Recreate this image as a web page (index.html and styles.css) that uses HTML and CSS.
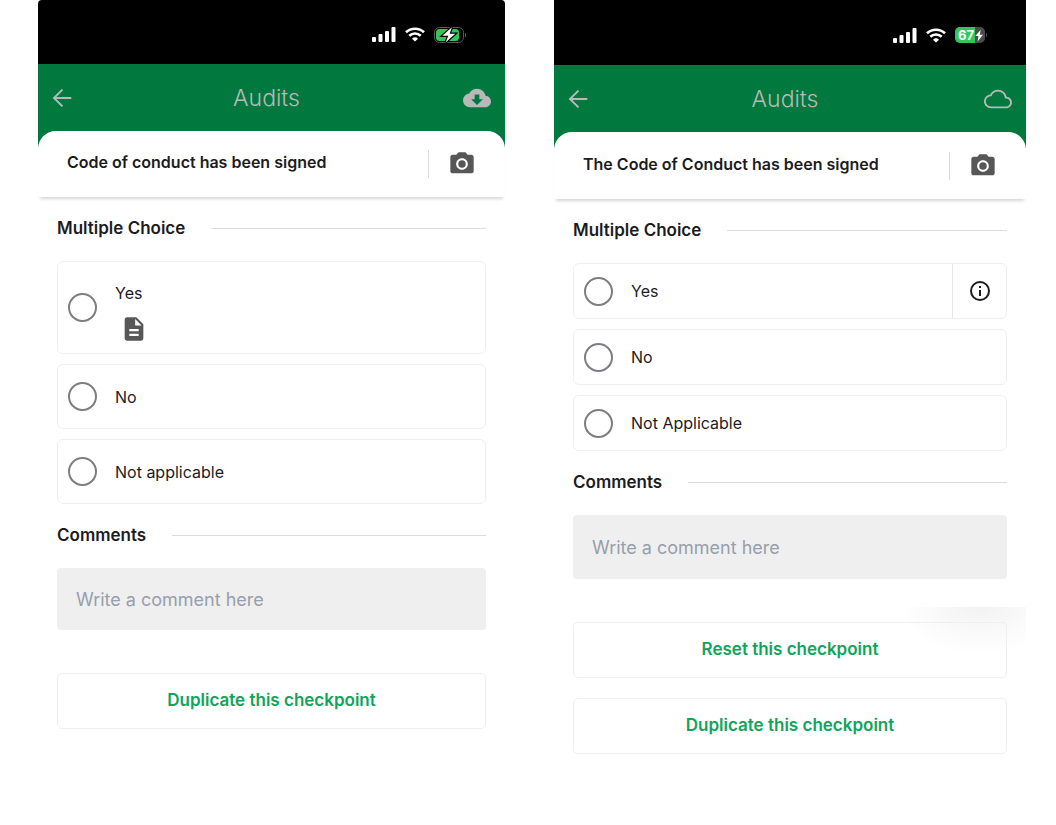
FILE: index.html
```
<!DOCTYPE html>
<html lang="en">
<head>
    <meta charset="UTF-8">
    <meta name="viewport" content="width=device-width, initial-scale=1.0">
    <title>Audits</title>
    <link rel="stylesheet" href="styles.css">
</head>
<body>
    <main class="screens">
        <section class="phone phone-rounded">
            <div class="status-bar">
                <svg class="signal" viewBox="0 0 24 15" fill="#fff">
                    <rect x="0" y="10" width="4" height="5" rx="1"/>
                    <rect x="6.500" y="7" width="4" height="8" rx="1"/>
                    <rect x="13" y="4" width="4" height="11" rx="1"/>
                    <rect x="19.500" y="0" width="4" height="15" rx="1"/>
                </svg>
                <svg class="wifi" viewBox="0 0 20 15" fill="none" stroke="#fff" stroke-width="2.600">
                    <path d="M1 5.300a13 13 0 0 1 18 0"/>
                    <path d="M4.300 8.800a8.200 8.200 0 0 1 11.400 0"/>
                    <path d="M10 14.600L7 11.700a4.400 4.400 0 0 1 6 0z" fill="#fff" stroke="none"/>
                </svg>
                <svg class="battery" viewBox="0 0 32 16">
                    <rect x="0.500" y="0.500" width="29" height="15" rx="5" fill="none" stroke="#5a5a5c"/>
                    <path d="M31 5.500a3 3 0 0 1 0 5z" fill="#5a5a5c"/>
                    <rect x="2" y="2" width="23" height="12" rx="3.500" fill="#31c759"/>
                    <path d="M18 0.300L8.300 8.700h6L11.600 15.500 21.300 6.700h-5.700z" fill="#fff" stroke="#000" stroke-width="2.400" paint-order="stroke"/>
                </svg>
            </div>
            <header class="app-bar">
                <button class="icon-btn" aria-label="Back">
                    <svg class="icon" viewBox="0 0 24 24" fill="currentColor"><path d="M20 11.200H7.200l5.800-5.800L11.800 4.200 4 12l7.800 7.800 1.200-1.200-5.800-5.800H20z"/></svg>
                </button>
                <h1>Audits</h1>
                <button class="icon-btn cloud-btn" aria-label="Download">
                    <svg class="icon" viewBox="0 0 24 24" fill="currentColor"><path d="M19.350 10.040C18.670 6.590 15.640 4 12 4 9.110 4 6.600 5.640 5.350 8.040 2.340 8.360 0 10.910 0 14c0 3.310 2.690 6 6 6h13c2.760 0 5-2.240 5-5 0-2.640-2.050-4.780-4.650-4.960zM17 13l-5 5-5-5h3V9h4v4h3z"/></svg>
                </button>
            </header>
            <div class="question-wrap">
                <div class="question">
                    <h2>Code of conduct has been signed</h2>
                    <button class="icon-btn camera-btn" aria-label="Take photo">
                        <svg class="icon" viewBox="0 0 24 24" fill="currentColor"><circle cx="12" cy="12" r="3.200"/><path d="M9 2L7.170 4H4c-1.100 0-2 .9-2 2v12c0 1.100.9 2 2 2h16c1.100 0 2-.9 2-2V6c0-1.100-.9-2-2-2h-3.170L15 2H9zm3 15c-2.760 0-5-2.240-5-5s2.240-5 5-5 5 2.240 5 5-2.240 5-5 5z"/></svg>
                    </button>
                </div>
            </div>
            <div class="content">
                <h3>Multiple Choice</h3>
                <div class="options">
                    <div class="option option-tall">
                        <input type="radio" name="signed-a" id="a-yes">
                        <div class="option-body">
                            <label for="a-yes">Yes</label>
                            <svg class="icon doc" viewBox="0 0 24 24" fill="currentColor"><path d="M14 2H6c-1.100 0-2 .9-2 2v16c0 1.100.9 2 2 2h12c1.100 0 2-.9 2-2V8l-6-6zm2 16H8v-2h8v2zm0-4H8v-2h8v2zm-3-5V3.500L18.500 9H13z"/></svg>
                        </div>
                    </div>
                    <div class="option">
                        <input type="radio" name="signed-a" id="a-no">
                        <label for="a-no">No</label>
                    </div>
                    <div class="option">
                        <input type="radio" name="signed-a" id="a-na">
                        <label for="a-na">Not applicable</label>
                    </div>
                </div>
                <h3><label for="a-comment">Comments</label></h3>
                <input type="text" class="comment" id="a-comment" placeholder="Write a comment here">
            </div>
            <div class="actions">
                <button class="btn">Duplicate this checkpoint</button>
            </div>
        </section>

        <section class="phone phone-compact">
            <div class="status-bar">
                <svg class="signal" viewBox="0 0 24 15" fill="#fff">
                    <rect x="0" y="10" width="4" height="5" rx="1"/>
                    <rect x="6.500" y="7" width="4" height="8" rx="1"/>
                    <rect x="13" y="4" width="4" height="11" rx="1"/>
                    <rect x="19.500" y="0" width="4" height="15" rx="1"/>
                </svg>
                <svg class="wifi" viewBox="0 0 20 15" fill="none" stroke="#fff" stroke-width="2.600">
                    <path d="M1 5.300a13 13 0 0 1 18 0"/>
                    <path d="M4.300 8.800a8.200 8.200 0 0 1 11.400 0"/>
                    <path d="M10 14.600L7 11.700a4.400 4.400 0 0 1 6 0z" fill="#fff" stroke="none"/>
                </svg>
                <svg class="battery" viewBox="0 0 32 16">
                    <rect x="0" y="0" width="30" height="16" rx="5" fill="#4c4c4e"/>
                    <path d="M31 5.500a3 3 0 0 1 0 5z" fill="#4c4c4e"/>
                    <path d="M5 0h15v16H5a5 5 0 0 1-5-5V5a5 5 0 0 1 5-5z" fill="#31c759"/>
                    <text x="3" y="13" class="battery-text">67</text>
                    <path d="M25.600 3L20.300 9h3.200l-1 5.500 5.500-6.800h-3.200z" fill="#fff"/>
                </svg>
            </div>
            <header class="app-bar">
                <button class="icon-btn" aria-label="Back">
                    <svg class="icon" viewBox="0 0 24 24" fill="currentColor"><path d="M20 11.200H7.200l5.800-5.800L11.800 4.200 4 12l7.800 7.800 1.200-1.200-5.800-5.800H20z"/></svg>
                </button>
                <h1>Audits</h1>
                <button class="icon-btn cloud-btn" aria-label="Sync">
                    <svg class="icon" viewBox="0 0 24 24" fill="currentColor"><path d="M19.350 10.040C18.670 6.590 15.640 4 12 4 9.110 4 6.600 5.640 5.350 8.040 2.340 8.360 0 10.910 0 14c0 3.310 2.690 6 6 6h13c2.760 0 5-2.240 5-5 0-2.640-2.050-4.780-4.650-4.960zM19 18.400H6c-2.430 0-4.400-1.970-4.400-4.400s1.970-4.400 4.400-4.400h.4C7.060 7.290 9.480 5.600 12 5.600c3.240 0 5.900 2.660 5.900 5.900v.1H19c1.880 0 3.400 1.520 3.400 3.400s-1.520 3.400-3.400 3.400z"/></svg>
                </button>
            </header>
            <div class="question-wrap">
                <div class="question">
                    <h2>The Code of Conduct has been signed</h2>
                    <button class="icon-btn camera-btn" aria-label="Take photo">
                        <svg class="icon" viewBox="0 0 24 24" fill="currentColor"><circle cx="12" cy="12" r="3.200"/><path d="M9 2L7.170 4H4c-1.100 0-2 .9-2 2v12c0 1.100.9 2 2 2h16c1.100 0 2-.9 2-2V6c0-1.100-.9-2-2-2h-3.170L15 2H9zm3 15c-2.760 0-5-2.240-5-5s2.240-5 5-5 5 2.240 5 5-2.240 5-5 5z"/></svg>
                    </button>
                </div>
            </div>
            <div class="content">
                <h3>Multiple Choice</h3>
                <div class="options">
                    <div class="option">
                        <input type="radio" name="signed-b" id="b-yes">
                        <label for="b-yes">Yes</label>
                        <button class="icon-btn info-btn" aria-label="More information">
                            <svg viewBox="0 0 24 24" fill="none" stroke="currentColor" stroke-width="2"><circle cx="12" cy="12" r="9"/><path d="M12 11v6M12 7v2"/></svg>
                        </button>
                    </div>
                    <div class="option">
                        <input type="radio" name="signed-b" id="b-no">
                        <label for="b-no">No</label>
                    </div>
                    <div class="option">
                        <input type="radio" name="signed-b" id="b-na">
                        <label for="b-na">Not Applicable</label>
                    </div>
                </div>
                <h3><label for="b-comment">Comments</label></h3>
                <input type="text" class="comment" id="b-comment" placeholder="Write a comment here">
            </div>
            <div class="actions actions-shaded">
                <button class="btn">Reset this checkpoint</button>
                <button class="btn">Duplicate this checkpoint</button>
            </div>
        </section>
    </main>
</body>
</html>
```
FILE: styles.css
```
* {
    margin: 0;
    padding: 0;
    box-sizing: border-box;
}

body {
    font-family: Inter, "Liberation Sans", sans-serif;
    font-size: 16px;
    line-height: 24px;
    color: #1c1c1e;
    background-color: #fff;
}

button,
input {
    font: inherit;
    color: inherit;
    border: none;
    background: none;
}

button {
    cursor: pointer;
}

.screens {
    display: grid;
    grid-template-columns: 467fr 472fr;
    align-items: start;
    gap: 49px;
    padding: 0 30px 0 38px;
}

.phone {
    --status-height: 64px;
    --question-height: 66px;
    --option-height: 65px;
    --comment-height: 62px;
}

.phone-compact {
    --status-height: 65px;
    --question-height: 67px;
    --option-height: 56px;
    --comment-height: 64px;
}

/* Status bar */
.status-bar {
    display: flex;
    justify-content: flex-end;
    align-items: center;
    gap: 9px;
    height: var(--status-height);
    padding: 5px 39px 0 0;
    background-color: #000;
}

.phone-rounded .status-bar {
    border-radius: 4px 4px 0 0;
}

.signal {
    width: 24px;
    height: 15px;
}

.wifi {
    width: 20px;
    height: 15px;
}

.battery {
    width: 32px;
    height: 16px;
}

.battery-text {
    font-size: 13px;
    font-weight: 700;
    fill: #fff;
}

/* App bar */
.app-bar {
    display: flex;
    align-items: center;
    height: 67px;
    padding: 0 14px 0 10px;
    background-color: #00783e;
    color: #b8b8b8;
}

.app-bar h1 {
    flex: 1;
    font-size: 23px;
    font-weight: 300;
    text-align: center;
}

.icon-btn {
    display: flex;
    align-items: center;
    justify-content: center;
}

.icon {
    display: block;
    width: 28px;
    height: 28px;
}

.cloud-btn {
    padding-left: 6px;
}

/* Question card */
.question-wrap {
    background: linear-gradient(#00783e 16px, #fff 16px);
    box-shadow: 0 4px 3px -2px rgba(0, 0, 0, 0.16);
}

.question {
    display: flex;
    align-items: center;
    height: var(--question-height);
    padding: 0 29px;
    background-color: #fff;
    border-radius: 18px 18px 0 0;
}

.question h2 {
    flex: 1;
    padding-bottom: 4px;
    font-size: 16px;
    font-weight: 600;
}

.camera-btn {
    padding-left: 19px;
    border-left: 1px solid #dcdcdc;
    color: #575757;
}

/* Checkpoint content */
.content {
    padding: 0 19px;
}

.content h3 {
    display: flex;
    align-items: center;
    gap: 26px;
    padding: 19px 0 21px;
    font-size: 17px;
    font-weight: 600;
}

.content h3::after {
    content: "";
    flex: 1;
    height: 1px;
    background-color: #dcdcde;
}

.options {
    display: flex;
    flex-direction: column;
    gap: 10px;
}

.option {
    display: flex;
    align-items: center;
    min-height: var(--option-height);
    padding-left: 10px;
    border: 1px solid #efefef;
    border-radius: 6px;
}

.option-tall {
    min-height: 93px;
}

.option input {
    appearance: none;
    width: 29px;
    height: 29px;
    margin-right: 18px;
    border: 2px solid #7d7d82;
    border-radius: 50%;
}

.option input:checked {
    background: radial-gradient(#00783e 8px, transparent 9px);
}

.option label {
    flex: 1;
}

.option-body {
    display: flex;
    flex: 1;
    flex-direction: column;
    gap: 10px;
    padding-top: 8px;
}

.doc {
    margin-left: 5px;
    color: #575757;
}

.info-btn {
    align-self: stretch;
    width: 54px;
    border-left: 1px solid #e6e6ea;
}

.info-btn svg {
    width: 24px;
    height: 24px;
}

.comment {
    display: block;
    width: 100%;
    height: var(--comment-height);
    padding: 0 19px;
    border-radius: 4px;
    background-color: #efefef;
    font-size: 18px;
}

.comment::placeholder {
    color: #989eab;
    opacity: 1;
}

/* Buttons */
.actions {
    display: flex;
    flex-direction: column;
    gap: 20px;
    margin-top: 28px;
    padding: 15px 19px;
}

.actions-shaded {
    background: radial-gradient(ellipse 80px 48px at calc(100% - 46px) 0, rgba(0, 0, 0, 0.05), transparent);
}

.btn {
    height: 56px;
    padding-bottom: 2px;
    border: 1px solid #efefef;
    border-radius: 5px;
    color: #0fa55a;
    font-size: 17px;
    font-weight: 600;
}
```
